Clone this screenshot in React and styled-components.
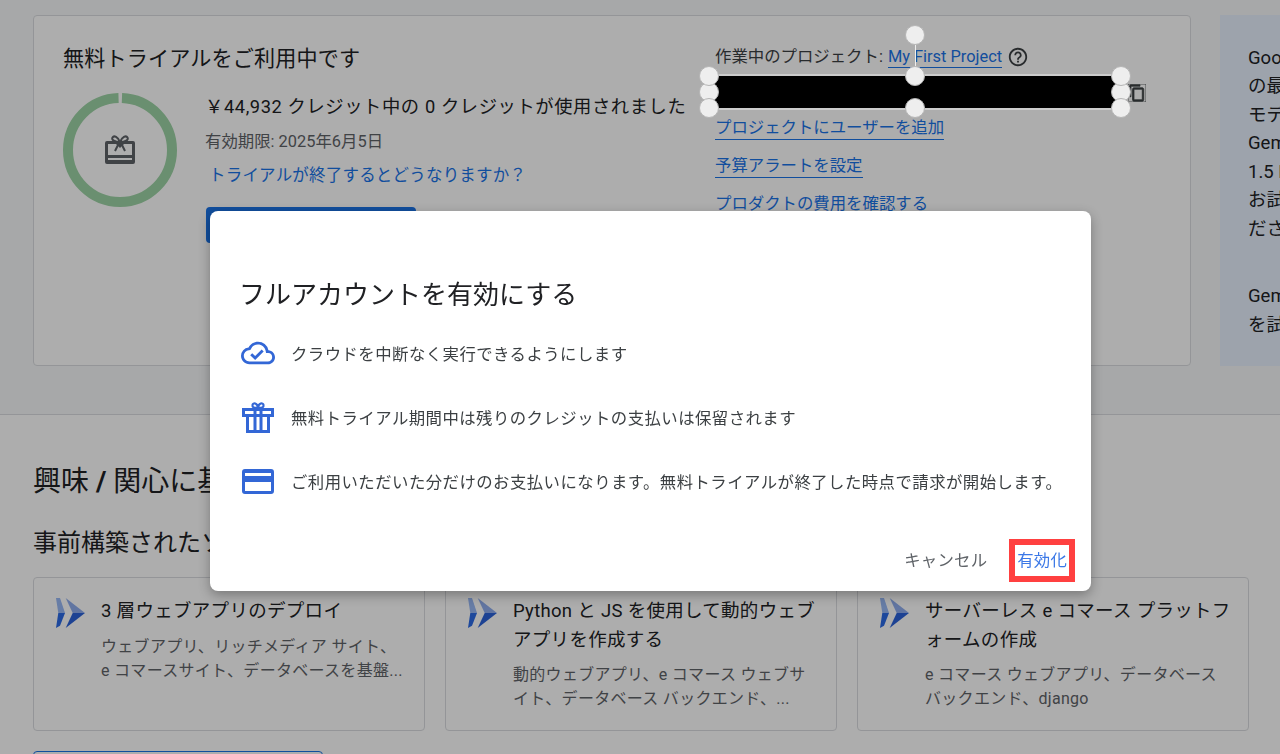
import React from 'react';
import styled, { createGlobalStyle } from 'styled-components';
import { MdOutlineCloudDone, MdContentCopy, MdHelpOutline } from 'react-icons/md';

const Global = createGlobalStyle`
  html, body {
    margin: 0;
    height: 754px;
    overflow: hidden;
    background: #fff;
  }
  body {
    font-family: Roboto, "Noto Sans CJK JP", sans-serif;
    color: #202124;
  }
`

const Page = styled.div`
  width: 1280px;
  height: 754px;
  overflow: hidden;
`

const Top = styled.section`
  height: 415px;
  box-sizing: border-box;
  padding: 15px 0 0 33px;
  background: #f7f8fa;
  border-bottom: 1px solid #dadce0;
  display: flex;
  gap: 29px;
`

const TrialCard = styled.div`
  width: 1158px;
  height: 351px;
  box-sizing: border-box;
  flex-shrink: 0;
  background: #fff;
  border: 1px solid #dadce0;
  border-radius: 4px;
  padding: 28px 29px;
  display: grid;
  grid-template-columns: 652px 1fr;
`

const CardTitle = styled.div`
  font-size: 21.1px;
  line-height: 30px;
  letter-spacing: 0.15px;
`

const TrialRow = styled.div`
  display: flex;
  gap: 28px;
  margin-top: 19px;
`

const Ring = styled.div`
  position: relative;
  width: 114px;
  height: 114px;
  flex-shrink: 0;
`

const TrialText = styled.div`
  padding-top: 1px;
`

const Credit = styled.div`
  font-size: 18.3px;
  line-height: 26px;
  letter-spacing: 0.6px;
  white-space: nowrap;
`

const Expiry = styled.div`
  font-size: 16.4px;
  line-height: 22px;
  color: #5f6368;
  margin-top: 11px;
  white-space: nowrap;
`

const TrialLink = styled.div`
  font-size: 16.5px;
  line-height: 24px;
  letter-spacing: 0.2px;
  color: #1a73e8;
  margin: 11px 0 0 4px;
  white-space: nowrap;
`

const Primary = styled.div`
  width: 210px;
  height: 36px;
  background: #1a73e8;
  border-radius: 4px;
  margin: 19px 0 0 1px;
`

const Side = styled.div`
  padding-top: 1px;
`

const ProjectLine = styled.div`
  display: flex;
  align-items: center;
  font-size: 16.4px;
  line-height: 24px;
  gap: 5px;
  white-space: nowrap;
  color: #3c4043;
  svg { color: #3c4043; }
`

const ProjectName = styled.span`
  color: #1a73e8;
  border-bottom: 1px solid #1a73e8;
  line-height: 21px;
`

const IdRow = styled.div`
  height: 34px;
  margin: 7px 0 7px;
  display: flex;
  align-items: center;
  justify-content: flex-end;
  width: 431px;
  color: #3c4043;
`

const LinkList = styled.div`
  display: flex;
  flex-direction: column;
  align-items: flex-start;
  gap: 15px;
`

const SideLink = styled.span`
  font-size: 16.4px;
  line-height: 22px;
  color: #1a73e8;
  border-bottom: 1px solid #1a73e8;
  white-space: nowrap;
`

const Promo = styled.div`
  width: 300px;
  height: 351px;
  flex-shrink: 0;
  box-sizing: border-box;
  background: #e8f0fe;
  padding: 29px 0 0 28px;
  font-size: 18.5px;
  line-height: 28.45px;
  white-space: nowrap;
  p { margin: 0 0 39px; }
  span { display: block; }
`

const Lower = styled.section`
  padding: 47px 0 0 33px;
`

const Heading = styled.h2`
  margin: 0;
  font-weight: 400;
  font-size: 28px;
  line-height: 40px;
  white-space: nowrap;
`

const Slash = styled.span`
  font-weight: 700;
`

const SubHeading = styled.h3`
  margin: 23px 0 0;
  font-weight: 400;
  font-size: 24px;
  line-height: 36px;
  white-space: nowrap;
`

const Cards = styled.div`
  display: flex;
  gap: 20px;
  margin-top: 16px;
`

const SolutionCard = styled.div`
  width: 392px;
  height: 154px;
  box-sizing: border-box;
  border: 1px solid #dadce0;
  border-radius: 4px;
  padding: 19px 12px 0 22px;
  display: flex;
  gap: 15px;
  flex-shrink: 0;
`

const Chevrons = styled.svg`
  width: 30px;
  height: 32px;
  flex-shrink: 0;
`

const SolutionTitle = styled.div`
  font-size: 18.5px;
  line-height: 28.5px;
  letter-spacing: 0.3px;
  line-break: anywhere;
`

const SolutionDesc = styled.div`
  font-size: 16px;
  line-height: 24px;
  color: #5f6368;
  margin-top: 9px;
  letter-spacing: 0.3px;
  white-space: nowrap;
`

const Outline = styled.div`
  width: 288px;
  height: 36px;
  margin-top: 20px;
  border: 1px solid #1a73e8;
  border-radius: 4px;
`

const Backdrop = styled.div`
  position: fixed;
  inset: 0;
  background: rgba(0, 0, 0, 0.32);
`

const Dialog = styled.div`
  position: absolute;
  left: 210px;
  top: 211px;
  width: 881px;
  height: 380px;
  box-sizing: border-box;
  padding: 65px 30px 0 29px;
  background: #fff;
  border-radius: 8px;
  box-shadow: 0 4px 12px rgba(0, 0, 0, 0.3);
  display: flex;
  flex-direction: column;
`

const DialogTitle = styled.div`
  font-size: 26px;
  line-height: 38px;
`

const Benefits = styled.div`
  display: flex;
  flex-direction: column;
  gap: 32px;
  margin-top: 23px;
  padding-left: 3px;
`

const Benefit = styled.div`
  display: flex;
  align-items: center;
  gap: 17px;
  height: 32px;
  font-size: 16.4px;
  letter-spacing: 0.45px;
  color: #3c4043;
  white-space: nowrap;
  svg { color: #3367d6; flex-shrink: 0; }
`

const CloudIcon = styled(MdOutlineCloudDone)`
  margin: 0 -1px;
`

const Actions = styled.div`
  display: flex;
  justify-content: flex-end;
  align-items: center;
  gap: 30px;
  margin: 52px -6px 0 0;
`

const ActionText = styled.span`
  font-size: 16.4px;
  line-height: 24px;
  letter-spacing: 0.2px;
  color: ${props => props.$accent ? '#3b78e7' : '#5f6368'};
`

const Marker = styled.div`
  position: absolute;
  left: 1009px;
  top: 539px;
  width: 66px;
  height: 43px;
  box-sizing: border-box;
  border: 6px solid #ff4040;
`

const Redaction = styled.div`
  position: absolute;
  left: 709px;
  top: 76px;
  width: 412px;
  height: 32px;
  background: #000;
  box-shadow: 0 0 0 2px #ccc;
`

const Stem = styled.div`
  position: absolute;
  left: 915px;
  top: 35px;
  width: 1px;
  height: 41px;
  background: #eee;
`

const Handle = styled.div`
  position: absolute;
  width: 20px;
  height: 20px;
  margin: -10px 0 0 -10px;
  box-sizing: border-box;
  border-radius: 50%;
  background: #eeeeee;
  border: 1px solid #b5b5b5;
  left: ${props => props.$x}px;
  top: ${props => props.$y}px;
`

const handles = [
  [915, 35], [709, 92], [1121, 92], [709, 76], [915, 76],
  [1121, 76], [709, 108], [915, 108], [1121, 108],
]

const Badge = styled.svg`
  position: absolute;
  left: 41px;
  top: 41px;
`

const GiftBadge = () => (
  <Badge width="32" height="32" viewBox="0 0 32 32">
    <path fill="#5f6368" fillRule="evenodd" d="M3 7h26a2 2 0 0 1 2 2v19a2 2 0 0 1-2 2H3a2 2 0 0 1-2-2V9a2 2 0 0 1 2-2zm1 3v11h24V10h-8l-4 4-4-4H4zm0 14v2h24v-2H4z" />
    <path fill="none" stroke="#5f6368" strokeWidth="2" d="M16 8c-2-5-6-7-7.500-4.500S11 8 16 8c5 0 9-2 7.500-4.500S18 3 16 8zM15 9l-4 8M17 9l4 8" />
  </Badge>
)

const GiftIcon = () => (
  <svg width="32" height="32" viewBox="0 0 32 32" fill="none" stroke="currentColor" strokeWidth="3">
    <path d="M1.500 8.500h29v6h-29zM5.500 14v16.500h21V14M13 8v22M19 8v22" />
    <path strokeWidth="2.200" d="M16 7c-4 0-6-.5-5.500-3s5-2.500 5.500 3c.5-5.500 5-5.500 5.500-3S20 7 16 7z" />
  </svg>
)

const CardIcon = () => (
  <svg width="32" height="32" viewBox="0 0 32 32">
    <path fill="currentColor" fillRule="evenodd" d="M3 4h26a3 3 0 0 1 3 3v19a3 3 0 0 1-3 3H3a3 3 0 0 1-3-3V7a3 3 0 0 1 3-3zm0 13v9h26v-9H3zm0-9v3h26V8H3z" />
  </svg>
)

const Logo = () => (
  <Chevrons viewBox="0 0 30 32">
    <path fill="#98b8f5" d="M0 1h4l5 15H2.300z" />
    <path fill="#2b6ae6" d="M2.300 16H9L4 28.700 0 31z" />
    <path fill="#8fadee" d="M9.700 1L29 16H16.700z" />
    <path fill="#2b62d9" d="M16.700 16H29L9.700 31z" />
  </Chevrons>
)

const solutions = [
  {
    title: '3 層ウェブアプリのデプロイ',
    desc: ['ウェブアプリ、リッチメディア サイト、', 'e コマースサイト、データベースを基盤...'],
  },
  {
    title: 'Python と JS を使用して動的ウェブアプリを作成する',
    desc: ['動的ウェブアプリ、e コマース ウェブサ', 'イト、データベース バックエンド、...'],
  },
  {
    title: 'サーバーレス e コマース プラットフォームの作成',
    desc: ['e コマース ウェブアプリ、データベース', 'バックエンド、django'],
  },
]

const App = () => {
  return (
    <>
      <Global />
      <Page>
        <Top>
          <TrialCard>
            <div>
              <CardTitle>無料トライアルをご利用中です</CardTitle>
              <TrialRow>
                <Ring>
                  <svg width="114" height="114" viewBox="0 0 114 114">
                    <circle cx="57" cy="57" r="52" fill="none" stroke="#9dd3a5" strokeWidth="10"
                      strokeDasharray="322.7 4" strokeDashoffset="-2" transform="rotate(-90 57 57)" />
                  </svg>
                  <GiftBadge />
                </Ring>
                <TrialText>
                  <Credit>￥44,932 クレジット中の 0 クレジットが使用されました</Credit>
                  <Expiry>有効期限: 2025年6月5日</Expiry>
                  <TrialLink>トライアルが終了するとどうなりますか？</TrialLink>
                  <Primary />
                </TrialText>
              </TrialRow>
            </div>
            <Side>
              <ProjectLine>
                作業中のプロジェクト: <ProjectName>My First Project</ProjectName>
                <MdHelpOutline size={22} />
              </ProjectLine>
              <IdRow><MdContentCopy size={18} stroke="currentColor" strokeWidth={1} /></IdRow>
              <LinkList>
                <SideLink>プロジェクトにユーザーを追加</SideLink>
                <SideLink>予算アラートを設定</SideLink>
                <SideLink>プロダクトの費用を確認する</SideLink>
              </LinkList>
            </Side>
          </TrialCard>
          <Promo>
            <p>
              <span>Google Cloud</span>
              <span>の最新の生成 AI</span>
              <span>モデルである</span>
              <span>Gemini</span>
              <span>1.5 Pro を</span>
              <span>お試しく</span>
              <span>ださい</span>
            </p>
            <p>
              <span>Gemini</span>
              <span>を試す</span>
            </p>
          </Promo>
        </Top>
        <Lower>
          <Heading>興味 <Slash>/</Slash> 関心に基づくおすすめ</Heading>
          <SubHeading>事前構築されたソリューション</SubHeading>
          <Cards>
            {solutions.map((item) => (
              <SolutionCard key={item.title}>
                <Logo />
                <div>
                  <SolutionTitle>{item.title}</SolutionTitle>
                  <SolutionDesc>
                    {item.desc.map((line) => <div key={line}>{line}</div>)}
                  </SolutionDesc>
                </div>
              </SolutionCard>
            ))}
          </Cards>
          <Outline />
        </Lower>
      </Page>
      <Backdrop />
      <Dialog>
        <DialogTitle>フルアカウントを有効にする</DialogTitle>
        <Benefits>
          <Benefit>
            <CloudIcon size={34} />
            クラウドを中断なく実行できるようにします
          </Benefit>
          <Benefit>
            <GiftIcon />
            無料トライアル期間中は残りのクレジットの支払いは保留されます
          </Benefit>
          <Benefit>
            <CardIcon />
            ご利用いただいた分だけのお支払いになります。無料トライアルが終了した時点で請求が開始します。
          </Benefit>
        </Benefits>
        <Actions>
          <ActionText>キャンセル</ActionText>
          <ActionText $accent>有効化</ActionText>
        </Actions>
      </Dialog>
      <Marker />
      <Stem />
      <Redaction />
      {handles.map(([x, y]) => <Handle key={`${x}-${y}`} $x={x} $y={y} />)}
    </>
  );
}

export default App;
